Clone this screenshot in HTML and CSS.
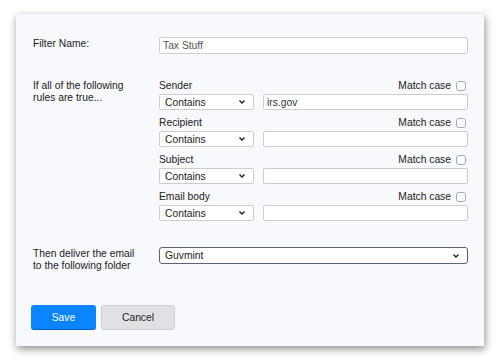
FILE: index.html
```html
<!DOCTYPE html>
<html lang="en">
<head>
    <meta charset="UTF-8">
    <title>Edit Filter</title>
    <link rel="stylesheet" href="styles.css">
</head>
<body>
    <div class="dialog">
        <div class="row">
            <label class="row-label" for="filterName">Filter Name:</label>
            <div class="row-field">
                <input type="text" id="filterName" class="text-input" value="Tax Stuff">
            </div>
        </div>

        <div class="row">
            <div class="row-label">If all of the following<br>rules are true...</div>
            <div class="row-field">
                <div class="rule">
                    <div class="rule-head">
                        <span>Sender</span>
                        <label class="match">Match case <input type="checkbox"></label>
                    </div>
                    <div class="rule-body">
                        <select class="select small"><option>Contains</option></select>
                        <input type="text" class="text-input" value="irs.gov">
                    </div>
                </div>
                <div class="rule">
                    <div class="rule-head">
                        <span>Recipient</span>
                        <label class="match">Match case <input type="checkbox"></label>
                    </div>
                    <div class="rule-body">
                        <select class="select small"><option>Contains</option></select>
                        <input type="text" class="text-input">
                    </div>
                </div>
                <div class="rule">
                    <div class="rule-head">
                        <span>Subject</span>
                        <label class="match">Match case <input type="checkbox"></label>
                    </div>
                    <div class="rule-body">
                        <select class="select small"><option>Contains</option></select>
                        <input type="text" class="text-input">
                    </div>
                </div>
                <div class="rule">
                    <div class="rule-head">
                        <span>Email body</span>
                        <label class="match">Match case <input type="checkbox"></label>
                    </div>
                    <div class="rule-body">
                        <select class="select small"><option>Contains</option></select>
                        <input type="text" class="text-input">
                    </div>
                </div>
            </div>
        </div>

        <div class="row">
            <div class="row-label">Then deliver the email<br>to the following folder</div>
            <div class="row-field">
                <select class="select folder"><option>Guvmint</option></select>
            </div>
        </div>

        <div class="actions">
            <button class="btn btn-save">Save</button>
            <button class="btn btn-cancel">Cancel</button>
        </div>
    </div>
</body>
</html>
```

FILE: styles.css
```css
body {
    margin: 0;
    padding: 14px 16px;
    background-color: #fff;
    font-family: "Liberation Sans", Arial, sans-serif;
    font-size: 10.3px;
    line-height: 12px;
    color: #222;
}
.dialog {
    width: 468px;
    height: 332px;
    box-sizing: border-box;
    padding: 23px 16px 0 17px;
    background-color: #f8f9fd;
    box-shadow: 1px 3px 8px rgba(0, 0, 0, 0.45);
}
.row {
    display: grid;
    grid-template-columns: 126px 1fr;
    margin-bottom: 26px;
}
.row-label {
    padding-top: 1px;
}
.row:nth-child(2) .row-label {
    padding-top: 0;
}
.text-input {
    display: block;
    width: 100%;
    height: 17px;
    box-sizing: border-box;
    margin: 0;
    padding: 0 3px;
    border: 1px solid #cdcdd0;
    border-radius: 2px;
    background-color: #fff;
    font-family: inherit;
    font-size: 10.3px;
    color: #555;
}
.rule {
    margin-bottom: 7px;
}
.rule:last-child {
    margin-bottom: 0;
}
.rule-head {
    display: flex;
    justify-content: space-between;
    align-items: center;
    height: 12px;
    margin-bottom: 2px;
}
.match {
    display: flex;
    align-items: center;
    gap: 5px;
    padding-right: 2px;
}
.match input {
    width: 10px;
    height: 10px;
    margin: 0;
    appearance: none;
    border: 1px solid #a9a9ad;
    border-radius: 3px;
    background-color: #fff;
}
.rule-body {
    display: flex;
    gap: 9px;
}
.rule-body .text-input {
    flex: 1;
    height: 16px;
    color: #333;
}
.select {
    appearance: none;
    height: 16px;
    margin: 0;
    padding: 0 16px 0 5px;
    border: 1px solid #cdcdd0;
    border-radius: 2px;
    background-color: #fff;
    background-image: url("data:image/svg+xml,%3Csvg xmlns='http://www.w3.org/2000/svg' width='8' height='6' viewBox='0 0 8 6'%3E%3Cpath d='M1.5 1.5 L4 4 L6.5 1.5' fill='none' stroke='%23222' stroke-width='1.4'/%3E%3C/svg%3E");
    background-repeat: no-repeat;
    background-position: right 7px center;
    font-family: inherit;
    font-size: 10.3px;
    color: #222;
}
.select.small {
    width: 95px;
    flex: none;
}
.select.folder {
    display: block;
    width: 100%;
    height: 17px;
    border-color: #5b6275;
    border-radius: 3px;
}
.actions {
    display: flex;
    gap: 5px;
    margin-top: 33px;
    margin-left: -2px;
}
.btn {
    height: 25px;
    border-radius: 3px;
    font-family: inherit;
    font-size: 10.3px;
    cursor: pointer;
}
.btn-save {
    width: 65px;
    border: none;
    border-bottom: 1px solid #0d5fc4;
    background-color: #0a84ff;
    color: #fff;
}
.btn-cancel {
    width: 74px;
    border: 1px solid #cfcfd3;
    background-color: #e1e1e5;
    color: #222;
}
```
